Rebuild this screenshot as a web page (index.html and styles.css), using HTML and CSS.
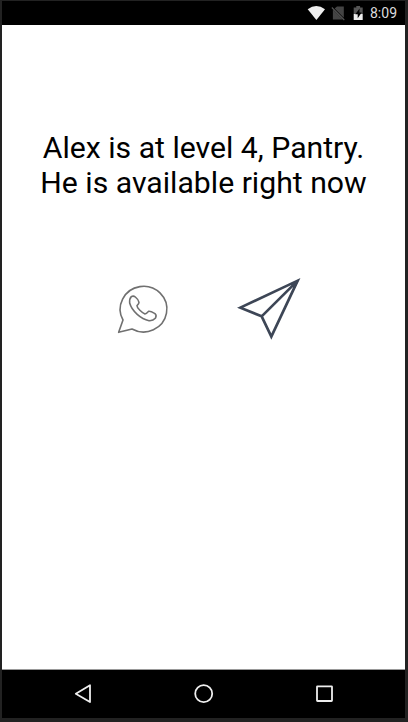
FILE: index.html
```html
<!DOCTYPE html>
<html lang="en">
<head>
<meta charset="utf-8">
<title>Alex</title>
<link rel="stylesheet" href="styles.css">
</head>
<body>
<div class="screen">
  <header class="status">
    <svg class="status-icons" width="66" height="24" viewBox="300 1 66 24">
      <path d="M307.7 9.2Q316.3 2.8 325 9.2L316.4 20Z" fill="#eee"/>
      <path d="M337 6.5h6.8v11.2L334.6 8.5Z" fill="#444"/>
      <path d="M332.9 9.5V19.5h10Z" fill="#444"/>
      <path d="M331.8 7.5L344.3 20" stroke="#555" stroke-width="1.1"/>
      <path d="M353.7 7.5h2.6V6h3.8v1.5h2.6V14h-9Z" fill="#555"/>
      <path d="M353.7 14h9v6h-9Z" fill="#eee"/>
      <path d="M359.6 8.5L355.3 14.3h2.4V18.3l4-5.7h-2.3Z" fill="#000"/>
    </svg>
    <span class="clock">8:09</span>
  </header>
  <main class="content">
    <h1 class="message">Alex is at level 4, Pantry.<br>He is available right now</h1>
    <div class="actions">
      <svg width="65" height="62" viewBox="1 1 195 186" fill="none" stroke="#707070" stroke-width="4.8" stroke-linejoin="round">
        <path d="M27 164L40 127A70 68.5 0 1 1 67 154Z"/>
        <path d="M65 57Q71 53 77 58Q87 66 88 74Q88 79 82 84C82 91 97 105 106 109Q110 109 117 101Q122 100 136 108Q142 113 137 122Q130 130 118 129C94 124 67 101 60 76Q59 63 65 57Z"/>
      </svg>
      <svg width="74" height="74" viewBox="0 0 222 222" fill="none" stroke="#3d4656" stroke-width="8">
        <path d="M25 107L197 26L118 194L89 133ZM89 133L197 26"/>
        <path d="M202 22L174 35L188 50Z" fill="#3d4656" stroke="none"/>
      </svg>
    </div>
  </main>
  <nav class="navbar">
    <svg width="403" height="48" viewBox="2 670 403 48" fill="none" stroke="#eee" stroke-width="1.8" stroke-linejoin="round">
      <path d="M90 685.2V702L75.8 693.7Z"/>
      <circle cx="203.7" cy="693.7" r="8.5"/>
      <rect x="317" y="686.3" width="15" height="14.7" rx=".5"/>
    </svg>
  </nav>
</div>
</body>
</html>
```
FILE: styles.css
```css
* { box-sizing: border-box; }
body {
  margin: 0;
  height: 722px;
  padding: 1px 3px 4px 2px;
  background: #222;
  font-family: Roboto, "Liberation Sans", sans-serif;
  overflow: hidden;
}
.screen {
  height: 717px;
  display: flex;
  flex-direction: column;
  background: #fff;
}
.status {
  height: 24px;
  flex: none;
  display: flex;
  align-items: center;
  padding-left: 298px;
  background: #000;
  color: #ddd;
}
.status-icons { flex: none; }
.clock {
  margin-left: 4px;
  font-size: 14px;
  line-height: 24px;
}
.content { flex: 1; }
.message {
  margin: 105px 0 0;
  text-align: center;
  font-size: 30.2px;
  font-weight: 400;
  line-height: 35px;
  color: #000;
  white-space: nowrap;
}
.actions {
  display: flex;
  gap: 57px;
  padding: 72px 0 0 108px;
}
.actions svg:first-child { margin-top: 6px; }
.navbar {
  height: 49px;
  flex: none;
  background: #000;
  border-top: 1px solid #999;
}
.navbar svg { display: block; }
```
